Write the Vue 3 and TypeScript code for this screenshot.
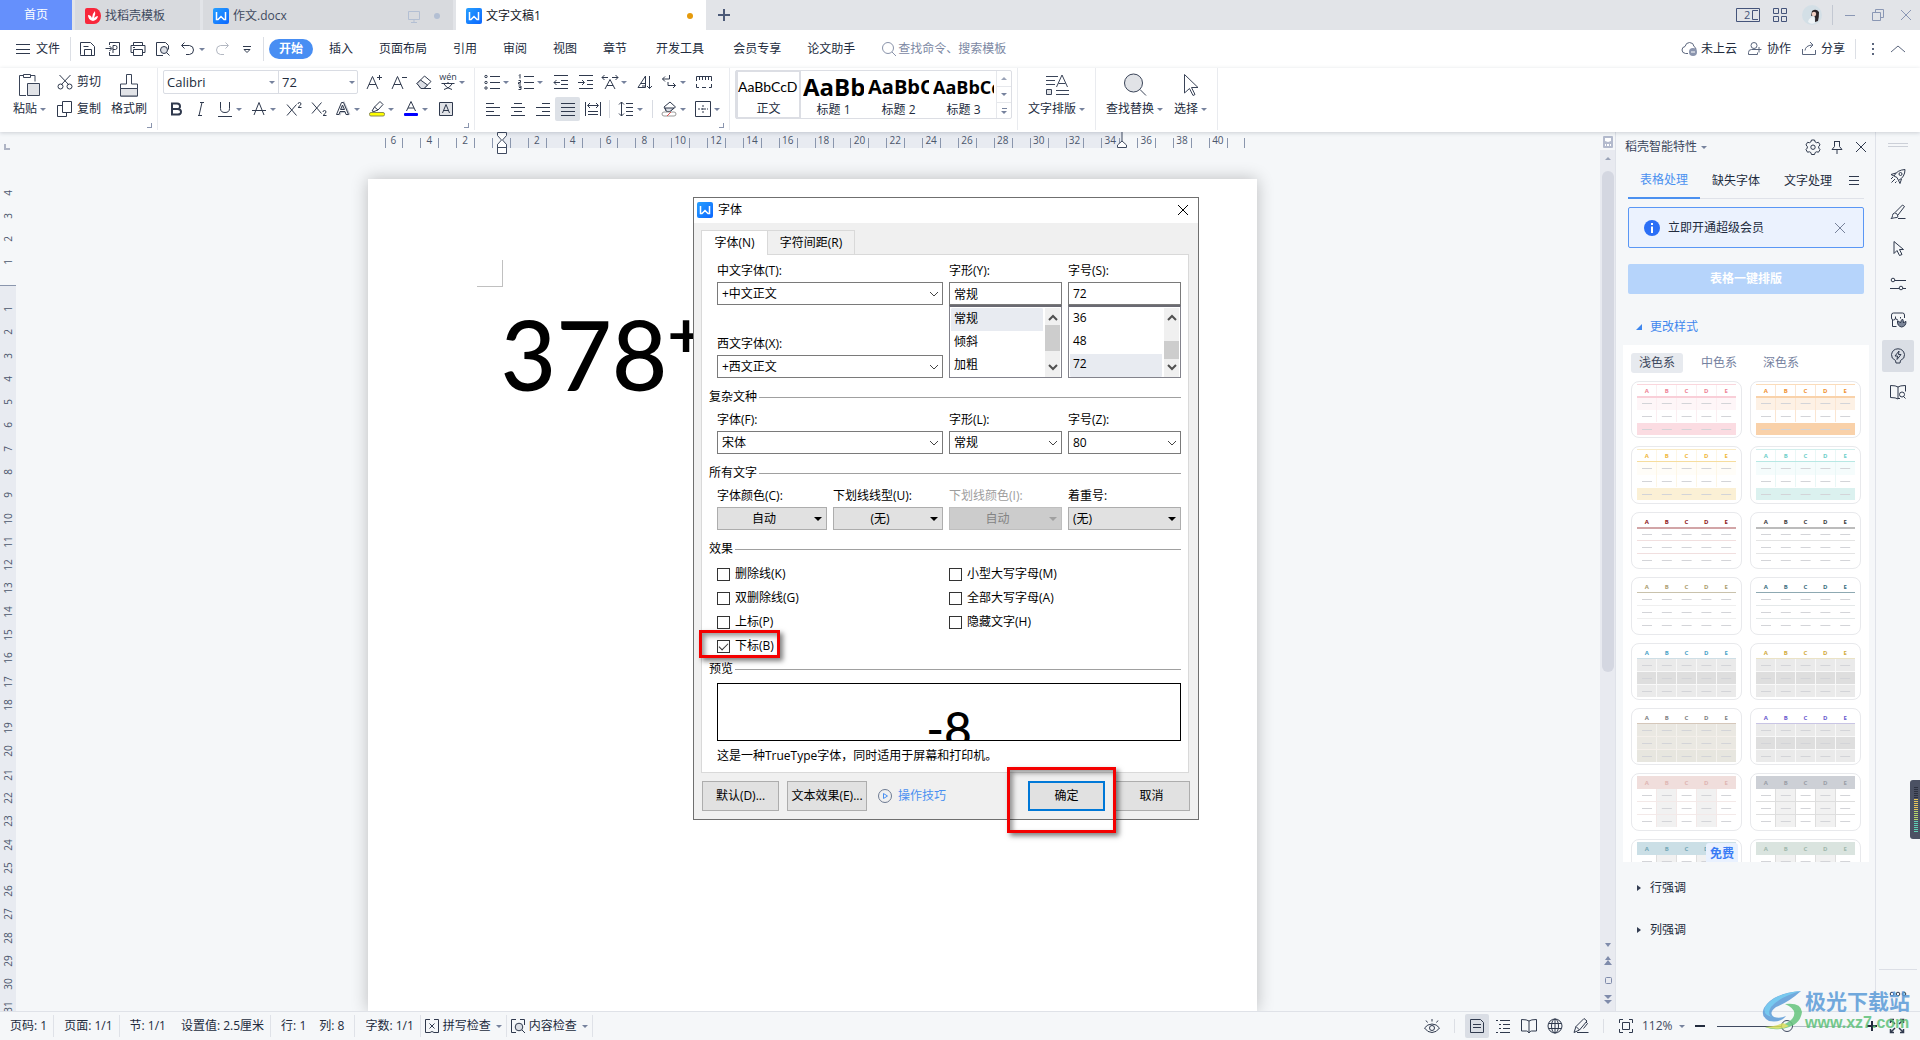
<script setup lang="ts">
import { ref } from 'vue'

interface Tool {
  icon: string
  title: string
  split?: boolean
  active?: boolean
  rule?: boolean
}

interface Thumb {
  letter: string
  line: string
  lineWidth: number
  top?: string
  head?: string
  rows?: string[]
  cols?: string
  rowLine?: string
  colLine?: string
  badge?: string
}

const icons: Record<string, string> = {
  menu: '<path d="M1 3.500h14M1 8.500h14M1 12.500h14"/>',
  save: '<path d="M.5 13.500v-12h10l4 4v9H.5zM4.500 14V8.500h7V14M3.500 5.500h5"/>',
  pdf: '<path d="M4.500 4V1.500h10v13h-10V11M.5 7.500h6M4.500 5l2.500 2.500L4.500 10M8 12V4.500h2.500q1.500 0 1.500 2t-1.500 2H8"/>',
  print: '<path d="M3.500 4.500v-3h9v3M3.500 11.500h-2.500v-7h14v7h-2.500M3.500 8.500h9v6h-9zM3 6.500h2"/>',
  preview: '<path d="M8 14.500H1.500v-13h9l3 3v4"/><circle cx="9" cy="9" r="3.500" fill="#dcdfe5"/><path d="M11.500 11.500l3 3"/>',
  undo: '<path d="M4.500 1.500l-3 3 3 3M2 4.500h7.500q4 .5 4 4.500t-4 4.500H6"/>',
  redo: '<path d="M11.500 1.500l3 3-3 3M14 4.500H6.500q-4 .5-4 4.500t4 4.500H10"/>',
  more: '<path d="M4 5.500h8M5 8.500h6l-3 3z"/>',
  search: '<circle cx="7" cy="7" r="5.500"/><path d="M11 11l4 4"/>',
  cloud: '<path d="M7 12.500H4.500q-3.500-.5-3.500-3.500 0-3 3-3.500 1-4 4.500-4 4 0 4.500 4 2 1 2 3"/><circle cx="12" cy="11" r="4" fill="#8a94ad" stroke="none"/><path d="M10 11h4" stroke="#fff"/>',
  collab: '<circle cx="7" cy="4.500" r="3"/><path d="M1.500 13.500v-2q0-3 3-3h5M1.500 13.500h9v-2M9 8.500h5.500M12 6v5.500"/>',
  share: '<path d="M1.500 8v5.500h13V9M4 9.500q.5-5 7-5.500M9 1l3 3-3 3"/>',
  cut: '<path d="M2.500 1l9.500 10M13.500 1L4 11"/><circle cx="3.500" cy="12.500" r="2.500"/><circle cx="12.500" cy="12.500" r="2.500"/>',
  copy: '<path d="M5 4.500H.5v11h9V12M5.500.5h9v11h-9z"/>',
  growA: '<path d="M1 15L6.500 2.500 12 15M3 10.500h7M11 3.500h5M13.500 1v5"/>',
  shrinkA: '<path d="M1 15L6.500 2.500 12 15M3 10.500h7M11 3.500h5"/>',
  eraser: '<path d="M1 9.500L8.500 2l6.500 5.500-7 7H5z"/><path d="M4.500 6l7 5-3.500 3.500H5L1 9.500z" fill="#dcdfe5"/><path d="M6 14.500h9"/>',
  bold: '<path d="M4 2.500h5q3 0 3 2.800T9 8H4zM4 8h5.500q3.500 0 3.500 2.800t-3.500 2.700H4z" stroke-width="2"/>',
  italic: '<path d="M7 1.500h4M5 14.500h4M9 1.500l-3 13"/>',
  underline: '<path d="M3.500 1v6.500q0 4 4.500 4t4.500-4V1M1 15.500h14"/>',
  strikeA: '<path d="M3 14L8 1.500 13 14M1 9.500h14"/>',
  sup: '<path d="M1 3.500l9.500 11M10.500 3.500L1 14.500M12 3q0-1.500 1.500-1.500T15 3q0 1-3 3.500h3.500"/>',
  sub: '<path d="M1 1.500l9.500 11M10.500 1.500L1 12.500M12 11q0-1.500 1.500-1.500T15 11q0 1-3 3.500h3.500"/>',
  fxA: '<path d="M4 14L9 3l5 11M6 10.500h6" stroke="#c4c8d0" stroke-width="3"/><path d="M1.500 13.500L6.500 1.500h2l5 12h-2.500l-1-3H5l-1 3zM5.500 8.500h4L7.500 4z" fill="#fff"/>',
  marker: '<path d="M3 10l2.500-4L11 .5l3 3L9 9l-4 1.500zM5.500 6L9 9"/><rect x=".5" y="11.500" width="15" height="3.500" rx="1.500" fill="#ff0" stroke="#8b8b55"/>',
  colorA: '<path d="M3.500 10L8 .5 12.500 10M5 7h6"/><rect x="1" y="12" width="14" height="3" rx="1" fill="#00f" stroke="none"/>',
  boxA: '<path d="M1.500 1.500h13v13h-13z" fill="#e1e3e7"/><path d="M4.500 12L8 3.500 11.500 12M5.500 9.500h5"/>',
  bullets: '<circle cx="2" cy="2.500" r="1.200"/><circle cx="2" cy="8.500" r="1.200"/><circle cx="2" cy="14" r="1.200"/><path d="M6 2.500h10M6 8.500h10M6 14.500h10"/>',
  numbers: '<path d="M1 1.500l1-1v4M.5 6.500h2v2h-2v1.500h2.500M.5 12h2.500v3.500H.5M1 13.500h2"/><path d="M6 2.500h10M6 8.500h10M6 14.500h10"/>',
  outdent: '<path d="M1 1.500h14M8 6.500h7M8 10.500h7M1 14.500h14M1 8.500h6M3.500 6L1 8.500 3.500 11"/>',
  indent: '<path d="M1 1.500h14M9 6.500h6M9 10.500h6M1 14.500h14M0 8.500h6M4 6l2.500 2.500L4 11"/>',
  charScale: '<path d="M3 15L8 5.500 13 15M5 11.500h6M0 3.500h6M2.500 1L0 3.500 2.500 6M16 3.500h-6M13.500 1L16 3.500 13.500 6"/>',
  sortA: '<path d="M1 13.500L8.500 2v11.500zM4 9.500h4.500M5 12h3M12.500 2v12.500M10 12l2.500 2.500L15 12"/>',
  wrap: '<path d="M2.500 2v3.500H8M5 3L2.500 5.500 5 8M13.500 5.500v6H5M11 9l2.500 2.500L11 14" stroke="none"/><path d="M8.500 1v4h-7M4 2.500L1.500 5 4 7.500M7 11.500h7.500M12 9l2.500 2.500L12 14M7 8v3.500"/>',
  tabs: '<path d="M.5 7V2.500h15V7M3.500 3v3M6.500 3v3M9.500 3v3M12.500 3v3M.5 10v3.500H3M6 13.500h4M13 13.500h2.500V10"/>',
  left: '<path d="M1 2.500h8M1 6.500h14M1 10.500h8M1 14.500h14"/>',
  center: '<path d="M4 2.500h8M1 6.500h14M4 10.500h8M1 14.500h14"/>',
  right: '<path d="M7 2.500h8M1 6.500h14M7 10.500h8M1 14.500h14"/>',
  justify: '<path d="M1 2.500h14M1 6.500h14M1 10.500h14M1 14.500h14"/>',
  distribute: '<path d="M.5 1v14M15.500 1v14M3 4.500h10M5 2L2.500 4.500 5 7M11 2l2.500 2.500L11 7M3 10.500h10M3 13.500h10"/>',
  spacing: '<path d="M3.500 1v14M1 3.500L3.500 1 6 3.500M1 12.500L3.500 15 6 12.500M8 2.500h7M8 6.500h7M8 10.500h7M8 14.500h7"/>',
  fill: '<path d="M3 6l6-5 5.500 5L9 10.500H5.500z"/><path d="M4 7h9L9 10.500H5.500z" fill="#dcdfe5"/><rect x="1" y="11" width="14" height="4" rx="2" stroke="#999"/><path d="M6 15l4-4" stroke="#e05050"/>',
  borders: '<path d="M.5 .5h15v15H.5z"/><path d="M8 4v9M3 8h10" stroke-dasharray="2 1"/>',
  gear: '<path d="M6.500 1h3l.7 2 1.300.7 2-.4 1.500 2.600-1.300 1.600v1.500l1.300 1.600-1.500 2.600-2-.4-1.300.7-.7 2h-3l-.7-2-1.300-.7-2 .4L1 10.600 2.300 9V7.500L1 5.900l1.500-2.600 2 .4L5.800 3z"/><circle cx="8" cy="8.200" r="2.200"/>',
  pin: '<path d="M5 2.500h6M5.500 2.500v5L3 10.500h10L10.500 7.500v-5M8 11v4"/>',
  close: '<path d="M3 3l10 10M13 3L3 13"/>',
  rocket: '<path d="M4 8q3-6 11-6.500Q15 9 8.500 12.500L7 9.500zM8.500 12.500l1.500 3 1.500-4.500M4 8L1 6.500 6 5"/><circle cx="10.500" cy="6" r="1.500"/><path d="M1 11l2-2M1.500 14.500L5 11M5 15l1.500-1.500"/>',
  brush: '<path d="M1 14.500q1.500-1 1.500-3t2-2.500 3 2-.5 2.500-6 1zM5 8.500L12.500 1l2 1.500L8 11M8 14.500h7.500"/>',
  cursor: '<path d="M4 1.500v12l3-3 2.500 5 2.500-1-2.500-5h4z"/>',
  sliders: '<circle cx="3" cy="4" r="1.800"/><path d="M5 4.500h11M0 12.500h9M13 12.500h3"/><circle cx="11" cy="12" r="1.800"/>',
  shop: '<path d="M6.500 14.500H2.500V8M1.500 3q0-2 2-2h9q2 0 2 2v3M1.500 3v3q0 2 2 2t2-2q.5 2 2.500 2M5.500 6V4.500M10.500 5v1.500"/><path d="M11.500 15Q7 14 7.500 9q2 0 3 2 .5-3 2-4 1 1.500 1 4 1-1.500 2.500-1.500 0 5-4.500 5.500z" fill="#7b8598"/>',
  bulb: '<path d="M5.500 12.500Q1 10.500 1.500 6.500 2.500 1 8 .8 13.500 1 14.500 6.500q.5 4-4 6l-.5 2.500H6zM9 3L5 8h2.500L7 11.500l4-5H8.500z"/>',
  book: '<path d="M8 3Q6 1.500.5 1.500v12Q6 13.500 8 15V3q2-1.500 7.500-1.500v6M8 14.500h2"/><circle cx="12" cy="10.500" r="2.500"/><path d="M13.500 12.500l2 2"/>',
  eye: '<path d="M.5 10Q3.500 6 8 6t7.500 4q-3 4.500-7.500 4.500T.5 10zM8 1v2.500M2 2.500l1.500 2M14 2.500l-1.500 2"/><circle cx="8" cy="10" r="2.500"/>',
  page: '<path d="M1.500 1.500h10l3 3v10h-13zM4 6.500h8M4 9.500h8"/>',
  outline: '<path d="M1 2.500h2M5 2.500h10M4 6.500h2M8 6.500h7M4 10.500h2M8 10.500h7M1 14.500h2M5 14.500h10"/>',
  reading: '<path d="M8 3Q6 1.500.5 1.500v11.500h5Q7 13 8 15q1-2 2.500-2h5V1.500Q10 1.500 8 3v12"/>',
  globe: '<circle cx="8" cy="8" r="7"/><ellipse cx="8" cy="8" rx="3.500" ry="7"/><path d="M8 1v14M1.500 5.500h13M1.500 10.500h13"/>',
  pen: '<path d="M1 14.500l2-6 8-8 3 2.500-7.500 9zM3 8.500L6.500 12M4 14.500h11.500M13 4l1.500 1.500-4 5"/>',
  fit: '<path d="M1.500 5V1.500H5M11 1.500h3.500V5M14.500 11v3.500H11M5 14.500H1.500V11M4.500 4.500h7v7h-7z"/>',
  full: '<path d="M1.500 5V1.500H5M11 1.500h3.500V5M14.500 11v3.500H11M5 14.500H1.500V11M2 2l4 4M14 2l-4 4M14 14l-4-4M2 14l4-4" stroke-width="1.500"/>',
  spell: '<path d="M6 1.500H1.500v13H6M10 1.500h4.500v13H10M5.500 5.500l5 5M10.500 5.500l-5 5M6 14.500l2-1 2 1"/>',
  content: '<path d="M6 1.500H1.500v13H6M10 1.500h4.500V7"/><circle cx="9" cy="9" r="3.800" fill="#dcdfe5"/><path d="M12 12l3 3"/>',
}

const fontTop: Tool[] = [
  { icon: 'growA', title: '增大字号' },
  { icon: 'shrinkA', title: '减小字号' },
  { icon: 'eraser', title: '清除格式' },
]
const fontBottom: Tool[] = [
  { icon: 'bold', title: '加粗' },
  { icon: 'italic', title: '倾斜' },
  { icon: 'underline', title: '下划线', split: true },
  { icon: 'strikeA', title: '删除线', split: true },
  { icon: 'sup', title: '上标' },
  { icon: 'sub', title: '下标' },
  { icon: 'fxA', title: '文字效果', split: true },
  { icon: 'marker', title: '突出显示', split: true },
  { icon: 'colorA', title: '字体颜色', split: true },
  { icon: 'boxA', title: '字符底纹' },
]
const paraTop: Tool[] = [
  { icon: 'bullets', title: '项目符号', split: true },
  { icon: 'numbers', title: '编号', split: true },
  { icon: 'outdent', title: '减少缩进量' },
  { icon: 'indent', title: '增加缩进量' },
  { icon: 'charScale', title: '中文版式', split: true },
  { icon: 'sortA', title: '排序' },
  { icon: 'wrap', title: '显示编辑标记', split: true },
  { icon: 'tabs', title: '制表位' },
]
const paraBottom: Tool[] = [
  { icon: 'left', title: '左对齐' },
  { icon: 'center', title: '居中' },
  { icon: 'right', title: '右对齐' },
  { icon: 'justify', title: '两端对齐', active: true },
  { icon: 'distribute', title: '分散对齐', rule: true },
  { icon: 'spacing', title: '行距', split: true, rule: true },
  { icon: 'fill', title: '底纹颜色', split: true },
  { icon: 'borders', title: '边框', split: true },
]

const menus = ['插入', '页面布局', '引用', '审阅', '视图', '章节', '开发工具', '会员专享', '论文助手']
const quick = ['save', 'pdf', 'print', 'preview']
const styles = [
  { sample: 'AaBbCcD', label: '正文', kind: 'normal' },
  { sample: 'AaBb', label: '标题 1', kind: 'h1' },
  { sample: 'AaBbC', label: '标题 2', kind: 'h2' },
  { sample: 'AaBbCc', label: '标题 3', kind: 'h3' },
]

// Ruler cells are one unit wide, labelled on even units only.
const hUnits = Array.from({ length: 48 }, (_, i) => i - 6)
const vUnits = Array.from({ length: 36 }, (_, i) => i - 4)
const hLabel = (n: number) => (n !== 0 && n % 2 === 0 ? Math.abs(n) : '')

const grey = ['#eaeaea', '#dedede', '#eaeaea']
const thumbs: Thumb[] = [
  { letter: '#ee7f95', top: '#fad7dd', line: '#f9cfd8', lineWidth: 2, rows: ['#fef6f8', '#fff', '#fbdce2'], colLine: '#fbeef1' },
  { letter: '#f0902e', top: '#fbdcba', line: '#f9d2aa', lineWidth: 2, rows: ['#fdf1e5', '#fff', '#f9d1a9'], colLine: '#fbe6d2' },
  { letter: '#efb83c', top: '#f9ebc7', line: '#f6dd9e', lineWidth: 1, rows: ['#fffdf8', '#fff', '#fbf0d5'], colLine: '#fdf6e6' },
  { letter: '#6fcfc9', top: '#d3efed', line: '#b8e8e4', lineWidth: 1, rows: ['#f5fcfc', '#fff', '#dbf1ef'], colLine: '#eaf7f6' },
  { letter: '#8c1216', line: '#d2a5a7', lineWidth: 2, rowLine: '#f1dfdf' },
  { letter: '#3c3c3c', line: '#bcbcbc', lineWidth: 2, rowLine: '#e4e4e4' },
  { letter: '#ab9d6e', line: '#c9c2ac', lineWidth: 1, rowLine: '#efefef' },
  { letter: '#3c6e7e', line: '#8ea9b2', lineWidth: 1, rowLine: '#e4e8e9' },
  { letter: '#4ba3c8', line: '#cfdfe6', lineWidth: 1, rows: grey, rowLine: '#f8f8f8', colLine: '#f8f8f8' },
  { letter: '#d1ab3c', line: '#ebe3c6', lineWidth: 1, rows: grey, rowLine: '#f8f8f8', colLine: '#f8f8f8' },
  { letter: '#808080', line: '#d5c7ba', lineWidth: 1, rows: ['#eae8e2', '#eae8e2', '#e7e6df'], rowLine: '#f4efea', colLine: '#f4f2ee' },
  { letter: '#6858cd', line: '#c9c5e4', lineWidth: 1, rows: grey, rowLine: '#f8f8f8', colLine: '#f8f8f8' },
  { letter: '#dfb6b3', line: '#f0dedc', lineWidth: 1, head: '#f0dedc', cols: '#f1f1f1', rowLine: '#f3e9e8', colLine: '#f3e9e8' },
  { letter: '#9a9ea6', line: '#cdd0d6', lineWidth: 1, head: '#cdd0d6', cols: '#f1f1f1', rowLine: '#dedede', colLine: '#dedede' },
  { letter: '#73a7b6', line: '#cbdfe6', lineWidth: 1, head: '#cbdfe6', cols: '#f1f1f1', rowLine: '#dedede', colLine: '#dedede', badge: '免费' },
  { letter: '#a0b8ac', line: '#dae4df', lineWidth: 1, head: '#dae4df', cols: '#f1f1f1', rowLine: '#dedede', colLine: '#dedede' },
]
const letters = ['A', 'B', 'C', 'D', 'E']
const railIcons = ['rocket', 'brush', 'cursor', 'sliders', 'shop', 'bulb', 'book']
const viewIcons = ['page', 'outline', 'reading', 'globe', 'pen']

const effects = ref([
  { id: 'strike', label: '删除线(K)', on: false },
  { id: 'smallcaps', label: '小型大写字母(M)', on: false },
  { id: 'dstrike', label: '双删除线(G)', on: false },
  { id: 'allcaps', label: '全部大写字母(A)', on: false },
  { id: 'superscript', label: '上标(P)', on: false },
  { id: 'hidden', label: '隐藏文字(H)', on: false },
  { id: 'subscript', label: '下标(B)', on: true },
])
const fontStyle = ref('常规')
const fontSize = ref('72')
const zoom = ref(48)
const meter = Array.from({ length: 23 }, (_, i) => (i < 6 ? '#2c3140' : i < 12 ? '#e6c65a' : i < 17 ? '#b5d76a' : '#5fd0b4'))
</script>

<template>
  <div class="app">
    <header class="tabbar">
      <button class="home">首页</button>
      <button class="doc docer">
        <svg class="logo" viewBox="0 0 16 16"><path d="M2 0h7a7 8 0 0 1 0 16H2q-2 0-2-2V2q0-2 2-2z" fill="#f8273b" /><path d="M8 13Q3 12 3 7q3 0 4 3 0-4 3-7 1 3-1 7 2-2 4-2-.5 4-5 5z" fill="#fff" /></svg>
        <span>找稻壳模板</span>
      </button>
      <button class="doc wide">
        <svg class="logo" viewBox="0 0 16 16"><use href="#wlogo" /></svg>
        <span>作文.docx</span>
        <svg class="ico mon" viewBox="0 0 16 16"><path d="M2.500 3.500h11v8h-11zM8 12v2.500M5 14.500h6" /></svg>
        <i class="dot"></i>
      </button>
      <button class="doc wide current">
        <svg class="logo" viewBox="0 0 16 16">
          <defs>
            <linearGradient id="wblue" x1="0" y1="0" x2="1" y2="1"><stop offset="0" stop-color="#27a0ff" /><stop offset="1" stop-color="#0b66ff" /></linearGradient>
            <g id="wlogo"><rect width="16" height="16" rx="2" fill="url(#wblue)" /><path d="M3.500 4v7.500h1.500L8 8.500l3 3h1.500V4" fill="none" stroke="#fff" stroke-width="1.500" /></g>
          </defs>
          <use href="#wlogo" />
        </svg>
        <span>文字文稿1</span>
        <i class="dot orange"></i>
      </button>
      <button class="plus" aria-label="新建"><svg viewBox="0 0 12 12"><path d="M6 0v12M0 6h12" stroke="#4c5a78" stroke-width="2" /></svg></button>
      <div class="sys">
        <svg class="s-two" viewBox="0 0 24 14"><path d="M.5.5h23v13H.5zM22 2.500h-5.500v9H22M19 11.500h2" /><text x="8" y="11">2</text></svg>
        <svg class="s-grid" viewBox="0 0 14 14"><path d="M.5.5h5v5h-5zM8.500.5h5v5h-5zM.5 8.500h5v5h-5zM8.500 8.500h5v5h-5z" /></svg>
        <svg class="s-avatar" viewBox="0 0 20 20"><circle cx="10" cy="10" r="10" fill="#d3dfe6" /><path d="M10 6q4-3 7 1 0 6-1 9l-3 1q1-4-1-7l-3 1z" fill="#2b2427" /><circle cx="12" cy="9" r="2.200" fill="#f1cfc2" /><path d="M6 17q1-5 6-5l1 6q-4 2-7-1z" fill="#eef3f6" /></svg>
        <i class="vline"></i>
        <button aria-label="最小化"><svg viewBox="0 0 12 12"><path d="M1 6.500h10" /></svg></button>
        <button aria-label="还原"><svg viewBox="0 0 12 12"><path d="M.5 3.500h8v8h-8zM3.500 3V.5h8v8H9" /></svg></button>
        <button aria-label="关闭"><svg viewBox="0 0 12 12"><path d="M1 1l10 10M11 1L1 11" /></svg></button>
      </div>
    </header>

    <nav class="menubar">
      <button class="file"><svg class="ico" viewBox="0 0 16 16" v-html="icons.menu"></svg>文件</button>
      <i class="vline"></i>
      <div class="quick">
        <button v-for="q in quick" :key="q" :aria-label="q"><svg class="ico" viewBox="0 0 16 16" v-html="icons[q]"></svg></button>
        <button class="undo" aria-label="撤消"><svg class="ico" viewBox="0 0 16 16" v-html="icons.undo"></svg><i class="caret"></i></button>
        <button class="faded" aria-label="恢复"><svg class="ico" viewBox="0 0 16 16" v-html="icons.redo"></svg></button>
        <button aria-label="更多"><svg class="ico" viewBox="0 0 16 16" v-html="icons.more"></svg></button>
      </div>
      <i class="vline"></i>
      <button class="pill">开始</button>
      <button v-for="m in menus" :key="m" class="menu" :class="{ roomy: m === '开发工具' }">{{ m }}</button>
      <label class="find"><svg class="ico" viewBox="0 0 16 16" v-html="icons.search"></svg><input type="text" aria-label="搜索" placeholder="查找命令、搜索模板" /></label>
      <div class="cloudbar">
        <button><svg class="ico" viewBox="0 0 16 16" v-html="icons.cloud"></svg>未上云</button>
        <button><svg class="ico" viewBox="0 0 16 16" v-html="icons.collab"></svg>协作</button>
        <button><svg class="ico" viewBox="0 0 16 16" v-html="icons.share"></svg>分享</button>
        <i class="vline"></i>
        <button class="tiny" aria-label="更多选项"><svg class="ico" viewBox="0 0 16 16"><path d="M7 3h2M7 8h2M7 13h2" stroke-width="2" /></svg></button>
        <button class="tiny" aria-label="收起功能区"><svg class="ico" viewBox="0 0 16 16"><path d="M1 11l7-6 7 6" /></svg></button>
      </div>
    </nav>

    <section class="ribbon">
      <div class="group clip">
        <button class="big">
          <svg class="bigico" viewBox="0 0 24 24"><path d="M8 22.500H1.500v-20h4M13 2.500h4v6" /><path d="M5.500 1.500h7v3h-7z" fill="#fff" /><path d="M9.500 10.500h12v12h-12z" fill="#e1e3e7" /></svg>
          <span>粘贴<i class="caret"></i></span>
        </button>
        <div class="stack">
          <button><svg class="ico" viewBox="0 0 16 16" v-html="icons.cut"></svg>剪切</button>
          <button><svg class="ico" viewBox="0 0 16 16" v-html="icons.copy"></svg>复制</button>
        </div>
        <button class="big">
          <svg class="bigico" viewBox="0 0 22 24"><path d="M8.500 11V1.500h5V11h6v12h-17V11z" /><path d="M2.500 15.500h17v7.500h-17z" fill="#e1e3e7" /></svg>
          <span>格式刷</span>
        </button>
        <i class="corner"></i>
      </div>

      <div class="group font">
        <div class="line">
          <div class="combo">
            <input class="name" type="text" aria-label="字体" value="Calibri" /><i class="caret"></i>
            <input class="size" type="text" aria-label="字号" value="72" /><i class="caret"></i>
          </div>
          <button v-for="t in fontTop" :key="t.icon" class="tool" :title="t.title"><svg class="ico" viewBox="0 0 16 16" v-html="icons[t.icon]"></svg></button>
          <button class="tool split" title="拼音指南">
            <svg class="ico" viewBox="0 0 16 16"><text class="wen" x="8" y="6">wén</text><path d="M1.500 9.500h13M8 8v1M4 10q2 4 8 5.500M12 10q-2 4-8 5.500" /></svg><i class="caret"></i>
          </button>
        </div>
        <div class="line">
          <button v-for="t in fontBottom" :key="t.icon" class="tool" :class="{ split: t.split }" :title="t.title">
            <svg class="ico" viewBox="0 0 16 16" v-html="icons[t.icon]"></svg><i v-if="t.split" class="caret"></i>
          </button>
        </div>
        <i class="corner"></i>
      </div>

      <div class="group para">
        <div class="line">
          <button v-for="t in paraTop" :key="t.icon" class="tool" :class="{ split: t.split }" :title="t.title">
            <svg class="ico" viewBox="0 0 16 16" v-html="icons[t.icon]"></svg><i v-if="t.split" class="caret"></i>
          </button>
        </div>
        <div class="line">
          <template v-for="t in paraBottom" :key="t.icon">
            <button class="tool" :class="{ split: t.split, active: t.active }" :title="t.title">
              <svg class="ico" viewBox="0 0 16 16" v-html="icons[t.icon]"></svg><i v-if="t.split" class="caret"></i>
            </button>
            <i v-if="t.rule" class="rule"></i>
          </template>
        </div>
        <i class="corner"></i>
      </div>

      <div class="group gallery">
        <div class="styles">
          <button v-for="s in styles" :key="s.label" class="style" :class="s.kind">
            <span class="sample">{{ s.sample }}</span>
            <span class="name">{{ s.label }}</span>
          </button>
          <div class="spin">
            <button aria-label="上一行"><i class="caret up"></i></button>
            <button aria-label="下一行"><i class="caret"></i></button>
            <button class="exp" aria-label="展开"><i class="caret"></i></button>
          </div>
        </div>
      </div>

      <div class="group wide">
        <button class="big">
          <svg class="bigico" viewBox="0 0 24 24"><path d="M1 3.500h12M1 7.500h9M1 11.500h9M11.500 14L17 2l5.500 12M13.500 10.500h7M11 17.500h13M11 21.500h13" /><path d="M1.500 16.500h5v5h-5z" fill="#e1e3e7" /></svg>
          <span>文字排版<i class="caret"></i></span>
        </button>
      </div>
      <div class="group wide">
        <button class="big">
          <svg class="bigico" viewBox="0 0 24 24"><circle cx="10.500" cy="10" r="9" fill="#e1e3e7" /><path d="M17 16.500l6 6" /></svg>
          <span>查找替换<i class="caret"></i></span>
        </button>
        <button class="big">
          <svg class="bigico" viewBox="0 0 24 24"><path d="M5.500 1.500v18.500l5-4.500 3.500 7 2-1-3.500-7h6.500z" /></svg>
          <span>选择<i class="caret"></i></span>
        </button>
      </div>
    </section>

    <main class="work">
      <div class="vruler">
        <svg class="tabmark" viewBox="0 0 6 6"><path d="M1 0v5h5" stroke="#aeb4c4" stroke-width="2" fill="none" /></svg>
        <div class="vstrip"><span v-for="n in vUnits" :key="n"><b v-if="n">{{ Math.abs(n) }}</b></span></div>
      </div>

      <div class="editor">
        <div class="hruler">
          <div class="hstrip">
            <span v-for="n in hUnits" :key="n">{{ hLabel(n) }}</span>
            <svg class="mark first" viewBox="0 0 10 22"><path d="M.5.5h9v3l-4 4.500 4 4.500v9h-9v-9l4-4.500-4-4.500zM.5 15.500h9M.5 12.500v3M9.500 12.500v3" /></svg>
            <svg class="mark last" viewBox="0 0 10 16"><path d="M5 0v9l4.500 4v2.500h-9V13L5 9" /></svg>
          </div>
        </div>
        <article class="paper">
          <div class="margin"></div>
          <p class="content">378<span>+</span></p>
        </article>
      </div>

      <div class="scroll">
        <svg class="ico brick" viewBox="0 0 10 12"><rect width="10" height="12" rx="1" fill="#b3bacd" stroke="none" /><path d="M2 2h6v3L5 6 2 5zM2 8h1v2h1V8h2v2h1V8h1v2H2z" fill="#fff" stroke="none" /></svg>
        <div class="track">
          <i class="caret up"></i>
          <div class="thumb"></div>
          <svg class="nav" viewBox="0 0 10 64"><path d="M2 1h6L5 5zM5 14l3 4H2zM5 18l4 5H1zM1 53h8l-4 4zM1 58h8l-4 4z" fill="#7f8bab" /><rect x="2.500" y="35.500" width="6" height="6" rx="1" fill="none" stroke="#7f8bab" /></svg>
        </div>
      </div>

      <aside class="pane">
        <div class="panehead">
          <span>稻壳智能特性</span><i class="caret"></i>
          <button class="first" aria-label="设置"><svg class="ico" viewBox="0 0 16 16" v-html="icons.gear"></svg></button>
          <button aria-label="固定"><svg class="ico" viewBox="0 0 16 16" v-html="icons.pin"></svg></button>
          <button aria-label="关闭面板"><svg class="ico" viewBox="0 0 16 16" v-html="icons.close"></svg></button>
        </div>
        <div class="panetabs">
          <button class="on">表格处理</button><button>缺失字体</button><button>文字处理</button>
          <button class="ham" aria-label="全部"><svg class="ico" viewBox="0 0 10 12"><path d="M0 1.500h10M0 5.500h10M0 9.500h10" /></svg></button>
        </div>
        <div class="banner">
          <svg viewBox="0 0 16 16"><circle cx="8" cy="8" r="8" fill="#2b6ff6" /><path d="M8 3v2M8 6.500V13" stroke="#fff" stroke-width="2" /></svg>
          <span>立即开通超级会员</span>
          <button aria-label="关闭提示"><svg class="ico" viewBox="0 0 16 16" v-html="icons.close"></svg></button>
        </div>
        <button class="layout">表格一键排版</button>
        <button class="fold open"><svg viewBox="0 0 6 6"><path d="M6 0v6H0z" fill="#3f87ee" /></svg>更改样式</button>
        <div class="panel">
          <div class="tones"><button class="on">浅色系</button><button>中色系</button><button>深色系</button></div>
          <div class="cards">
            <button v-for="(t, i) in thumbs" :key="i" class="card" :aria-label="'表格样式 ' + (i + 1)">
              <svg viewBox="0 0 99 51">
                <rect v-if="t.head" width="99" height="13" :fill="t.head" />
                <template v-if="t.cols">
                  <rect x="19.800" y="13" width="19.800" height="38" :fill="t.cols" />
                  <rect x="59.400" y="13" width="19.800" height="38" :fill="t.cols" />
                </template>
                <template v-if="t.rows">
                  <rect v-for="(c, r) in t.rows" :key="r" width="99" :y="13 + r * 13" :height="r === 2 ? 12 : 13" :fill="c" />
                </template>
                <rect v-if="t.top" width="99" height="1" :fill="t.top" />
                <template v-if="t.colLine">
                  <rect v-for="c in 4" :key="c" :x="c * 20 - 1" :y="t.cols || t.rowLine ? 13 : 1" width="1" :height="t.top ? 37 : 38" :fill="t.colLine" />
                </template>
                <template v-if="t.rowLine">
                  <rect y="25" width="99" height="1" :fill="t.rowLine" />
                  <rect y="38" width="99" height="1" :fill="t.rowLine" />
                </template>
                <rect y="12" width="99" :height="t.lineWidth" :fill="t.line" />
                <template v-for="(l, c) in letters" :key="l">
                  <text :x="9.9 + c * 19.8" y="9" :fill="t.letter">{{ l }}</text>
                  <rect v-for="r in 3" :key="r" :x="5 + c * 19.8" :y="6 + r * 13" width="10" height="1" fill="#d3d4d8" />
                </template>
              </svg>
              <span v-if="t.badge" class="badge">{{ t.badge }}</span>
            </button>
          </div>
        </div>
        <button class="fold"><svg viewBox="0 0 6 6"><path d="M1 0l4 3-4 3z" fill="#333d52" /></svg>行强调</button>
        <button class="fold"><svg viewBox="0 0 6 6"><path d="M1 0l4 3-4 3z" fill="#333d52" /></svg>列强调</button>
      </aside>

      <aside class="rail">
        <div class="grip"></div>
        <button v-for="r in railIcons" :key="r" :class="{ on: r === 'bulb' }" :aria-label="r"><svg class="ico" viewBox="0 0 16 16" v-html="icons[r]"></svg></button>
        <div class="railfoot"><svg class="ico" viewBox="0 0 18 6"><circle cx="3" cy="3" r="1.800" /><circle cx="9" cy="3" r="1.800" /><circle cx="15" cy="3" r="1.800" /></svg></div>
      </aside>
    </main>

    <footer class="status">
      <span class="cell lead">页码: 1</span>
      <span class="cell">页面: 1/1</span>
      <span class="cell open">节: 1/1</span>
      <span class="cell">设置值: 2.5厘米</span>
      <span class="cell open">行: 1</span>
      <span class="cell pad">列: 8</span>
      <span class="cell">字数: 1/1</span>
      <button class="cell check"><svg class="ico" viewBox="0 0 16 16" v-html="icons.spell"></svg>拼写检查<i class="caret"></i></button>
      <button class="cell check"><svg class="ico" viewBox="0 0 16 16" v-html="icons.content"></svg>内容检查<i class="caret"></i></button>
      <div class="views">
        <button aria-label="护眼模式"><svg class="ico" viewBox="0 0 16 16" v-html="icons.eye"></svg></button>
        <i class="vline"></i>
        <button v-for="v in viewIcons" :key="v" :class="{ on: v === 'page' }" :aria-label="v"><svg class="ico" viewBox="0 0 16 16" v-html="icons[v]"></svg></button>
        <i class="vline"></i>
        <button aria-label="适合页面"><svg class="ico" viewBox="0 0 16 16" v-html="icons.fit"></svg></button>
        <button class="pct">112%<i class="caret"></i></button>
        <button class="step" aria-label="缩小"><svg viewBox="0 0 10 10"><path d="M0 5h10" /></svg></button>
        <input v-model="zoom" type="range" min="0" max="100" aria-label="缩放" />
        <button class="step" aria-label="放大"><svg viewBox="0 0 10 10"><path d="M0 5h10M5 0v10" /></svg></button>
        <button class="fullscreen" aria-label="全屏"><svg class="ico" viewBox="0 0 16 16" v-html="icons.full"></svg></button>
      </div>
    </footer>

    <section class="dialog" role="dialog" aria-label="字体">
      <div class="titlebar">
        <svg class="logo" viewBox="0 0 16 16"><use href="#wlogo" /></svg>
        <span>字体</span>
        <button aria-label="关闭对话框"><svg viewBox="0 0 12 12"><path d="M1 1l10 10M11 1L1 11" stroke="#000" /></svg></button>
      </div>
      <div class="dtabs"><button class="on">字体(N)</button><button>字符间距(R)</button></div>
      <div class="sheet">
        <div class="cols three">
          <div class="col">
            <div class="field">
              <label for="cn">中文字体(T):</label>
              <div class="drop"><select id="cn"><option>+中文正文</option></select><svg viewBox="0 0 10 6"><path d="M1 1l4 4 4-4" /></svg></div>
            </div>
            <div class="field">
              <label for="en">西文字体(X):</label>
              <div class="drop"><select id="en"><option>+西文正文</option></select><svg viewBox="0 0 10 6"><path d="M1 1l4 4 4-4" /></svg></div>
            </div>
          </div>
          <div class="field">
            <label for="fs">字形(Y):</label>
            <input id="fs" v-model="fontStyle" type="text" />
            <div class="list">
              <select v-model="fontStyle" size="3" aria-label="字形列表"><option>常规</option><option>倾斜</option><option>加粗</option></select>
              <div class="bar"><svg viewBox="0 0 10 6"><path d="M1 5l4-4 4 4" /></svg><i></i><svg viewBox="0 0 10 6"><path d="M1 1l4 4 4-4" /></svg></div>
            </div>
          </div>
          <div class="field">
            <label for="sz">字号(S):</label>
            <input id="sz" v-model="fontSize" type="text" />
            <div class="list">
              <select v-model="fontSize" size="3" aria-label="字号列表"><option>36</option><option>48</option><option>72</option></select>
              <div class="bar low"><svg viewBox="0 0 10 6"><path d="M1 5l4-4 4 4" /></svg><i></i><svg viewBox="0 0 10 6"><path d="M1 1l4 4 4-4" /></svg></div>
            </div>
          </div>
        </div>

        <h3>复杂文种</h3>
        <div class="cols three">
          <div class="field"><label for="cf">字体(F):</label><div class="drop"><select id="cf"><option>宋体</option></select><svg viewBox="0 0 10 6"><path d="M1 1l4 4 4-4" /></svg></div></div>
          <div class="field"><label for="cs">字形(L):</label><div class="drop"><select id="cs"><option>常规</option></select><svg viewBox="0 0 10 6"><path d="M1 1l4 4 4-4" /></svg></div></div>
          <div class="field"><label for="cz">字号(Z):</label><div class="drop"><select id="cz"><option>80</option></select><svg viewBox="0 0 10 6"><path d="M1 1l4 4 4-4" /></svg></div></div>
        </div>

        <h3>所有文字</h3>
        <div class="cols four">
          <div class="field"><label for="fc">字体颜色(C):</label><div class="drop flat"><select id="fc"><option>自动</option></select><i></i></div></div>
          <div class="field"><label for="ul">下划线线型(U):</label><div class="drop flat"><select id="ul"><option>(无)</option></select><i></i></div></div>
          <div class="field off"><label for="uc">下划线颜色(I):</label><div class="drop flat"><select id="uc" disabled><option>自动</option></select><i></i></div></div>
          <div class="field"><label for="em">着重号:</label><div class="drop flat start"><select id="em"><option>(无)</option></select><i></i></div></div>
        </div>

        <h3>效果</h3>
        <div class="effects">
          <label v-for="e in effects" :key="e.id"><input v-model="e.on" type="checkbox" />{{ e.label }}</label>
        </div>

        <h3 class="tight">预览</h3>
        <div class="sampler">-8</div>
        <p class="note">这是一种TrueType字体，同时适用于屏幕和打印机。</p>
      </div>
      <div class="actions">
        <button>默认(D)...</button>
        <button class="mid">文本效果(E)...</button>
        <a href="#"><svg viewBox="0 0 14 14"><circle cx="7" cy="7" r="6.500" stroke="#6d7a92" /><path d="M5.500 4.500v5l4-2.500z" stroke="#4a90f0" /></svg>操作技巧</a>
        <button class="ok">确定</button>
        <button>取消</button>
      </div>
      <div class="hint hint-sub"></div>
      <div class="hint hint-ok"></div>
    </section>

    <div class="meter"><i v-for="(c, i) in meter" :key="i" :style="{ background: c }"></i></div>

    <div class="watermark">
      <svg viewBox="0 0 44 42">
        <path d="M40 2Q12 4 3 19-1 27 8 32q12 2 17-5-6 3-12 1-6-4 2-10Q28 13 40 2z" fill="#5b9bd8" />
        <path d="M40 2Q18 8 10 18q-5 9 3 10-12-1-9-10Q14 4 40 2z" fill="#62c2ee" />
        <path d="M24 15q16-2 17 8-2 15-22 17-8 1-15-2 20 0 27-8 7-9-7-15z" fill="#65c47d" />
        <path d="M4 38q12-1 18-4l6 3q-10 5-24 1z" fill="#d7dd5a" />
      </svg>
      <div><strong>极光下载站</strong><em>www.xz7.com</em></div>
    </div>
  </div>
</template>

<style>
body {
  overflow: hidden;
}
</style>

<style scoped>
.app {
  position: relative;
  display: flex;
  flex-direction: column;
  height: 100vh;
  overflow: hidden;
  background: #f5f7f9;
  color: #222b3d;
  font: 12px/18px "Open Sans", "Noto Sans CJK SC", sans-serif;
}
.app * {
  box-sizing: border-box;
}
button,
input,
select {
  margin: 0;
  padding: 0;
  border: 0;
  background: none;
  color: inherit;
  font: inherit;
  outline: 0;
}
button {
  display: inline-flex;
  align-items: center;
  justify-content: center;
  flex: none;
  white-space: nowrap;
}
svg {
  display: block;
  flex: none;
  overflow: visible;
}
.ico {
  width: 16px;
  height: 16px;
  fill: none;
  stroke: #2f394d;
}
.logo {
  width: 16px;
  height: 16px;
}
.caret {
  flex: none;
  width: 0;
  height: 0;
  border: 3px solid transparent;
  border-top-color: #76829d;
  border-bottom-width: 0;
}
.caret.up {
  border-top-width: 0;
  border-bottom: 3px solid #9aa3b8;
}
.vline {
  flex: none;
  width: 1px;
  height: 24px;
  background: #dcdfe5;
}

/* window tabs */
.tabbar {
  display: flex;
  flex: none;
  height: 30px;
  background: #e2e4e8;
}
.home {
  width: 72px;
  margin-right: 3px;
  background: #6590fc;
  color: #fff;
}
.doc {
  justify-content: flex-start;
  gap: 4px;
  width: 125px;
  margin-right: 3px;
  padding: 2px 10px 0;
  background: #d8dade;
  color: #3f4a60;
}
.wide.doc {
  width: 250px;
}
.doc.current {
  margin-right: 0;
  background: #fff;
  color: #14181f;
}
.mon {
  margin-left: auto;
  stroke: #b3bfd3;
}
.dot {
  width: 6px;
  height: 6px;
  margin: 0 3px 0 8px;
  border-radius: 3px;
  background: #b3bfd3;
}
.dot.orange {
  margin-left: auto;
  background: #e59a0c;
}
.plus {
  width: 36px;
}
.plus svg {
  width: 12px;
  height: 12px;
}
.sys {
  display: flex;
  align-items: center;
  margin-left: auto;
}
.sys svg {
  fill: none;
  stroke: #45547a;
}
.sys button {
  width: 28px;
  height: 30px;
}
.sys button svg {
  width: 12px;
  height: 12px;
  stroke: #8a97b4;
}
.s-two {
  width: 24px;
  height: 14px;
}
.s-two text {
  fill: #45547a;
  stroke: none;
  font-size: 11px;
}
.s-grid {
  width: 14px;
  height: 14px;
  margin: 0 15px 0 13px;
}
.s-avatar.s-avatar {
  width: 20px;
  height: 20px;
  margin-right: 10px;
  stroke: none;
}
.sys .vline {
  height: 20px;
  margin-right: 3px;
  background: #c3c8d2;
}

/* menu bar */
.menubar {
  display: flex;
  align-items: center;
  flex: none;
  height: 38px;
  padding-left: 15px;
  background: #fff;
}
.file {
  gap: 5px;
  margin-right: 10px;
}
.quick {
  display: flex;
  align-items: center;
  margin: 0 4px;
}
.quick button {
  width: 25px;
  height: 24px;
}
.quick .undo {
  width: 34px;
  gap: 3px;
}
.faded .ico {
  stroke: #b3b8c2;
}
.pill {
  width: 44px;
  height: 20px;
  margin: 0 3px 0 5px;
  border-radius: 10px;
  background: #488ef3;
  color: #fff;
  font-weight: 700;
}
.menu {
  padding: 0 13px;
}
.menu.roomy {
  padding: 0 16px;
}
.find {
  display: flex;
  align-items: center;
  gap: 1px;
  margin-left: 13px;
}
.find .ico {
  stroke: #8993aa;
}
.find input {
  width: 140px;
}
.find input::placeholder {
  color: #7c88a3;
  opacity: 1;
}
.cloudbar {
  display: flex;
  align-items: center;
  margin-left: auto;
  padding-right: 14px;
}
.cloudbar button {
  gap: 4px;
  margin-right: 10px;
}
.cloudbar .vline {
  height: 20px;
}
.cloudbar .ico {
  stroke: #5b667d;
}
.cloudbar .tiny {
  margin: 0 0 0 9px;
}

/* ribbon */
.ribbon {
  position: relative;
  z-index: 1;
  display: flex;
  flex: none;
  height: 64px;
  background: #fff;
  box-shadow: 0 1px 4px rgba(40, 50, 70, 0.2);
}
.group {
  position: relative;
  display: flex;
  height: 62px;
  border-right: 1px solid #e9ebef;
}
.corner {
  position: absolute;
  right: 5px;
  bottom: 2px;
  width: 5px;
  height: 5px;
  border: solid #8a95ae;
  border-width: 0 1px 1px 0;
}
.big {
  flex-direction: column;
  justify-content: flex-start;
  gap: 3px;
  height: 50px;
  margin-top: 5px;
}
.big span {
  display: flex;
  align-items: center;
  gap: 3px;
  height: 18px;
}
.bigico {
  width: 24px;
  height: 24px;
  fill: none;
  stroke: #3a4458;
}
.clip {
  padding: 0 10px 0 13px;
}
.stack {
  display: flex;
  flex-direction: column;
  gap: 3px;
  margin: 2px 10px 0 11px;
}
.stack button {
  gap: 4px;
  height: 24px;
}
.font,
.para {
  flex-direction: column;
  gap: 3px;
  padding: 2px 0 0 5px;
}
.font {
  width: 317px;
}
.para {
  width: 255px;
}
.line {
  display: flex;
  align-items: center;
  height: 24px;
}
.tool {
  width: 25px;
  height: 24px;
}
.tool.split {
  justify-content: flex-start;
  width: 34px;
  padding-left: 4px;
  gap: 3px;
}
.tool.active {
  border-radius: 2px;
  background: #dde1e7;
}
.rule {
  width: 1px;
  height: 18px;
  margin: 0 4px;
  background: #d8dbe2;
}
.wen {
  fill: #2f394d;
  stroke: none;
  font: 9px "Open Sans", sans-serif;
  text-anchor: middle;
}
.combo {
  display: flex;
  flex: none;
  align-items: center;
  width: 195px;
  height: 24px;
  margin-right: 3px;
  border: 1px solid #d9dce3;
  border-radius: 2px;
}
.combo input {
  height: 22px;
  padding-left: 3px;
  font-size: 13px;
}
.combo .name {
  width: 105px;
}
.combo .size {
  width: 71px;
  margin-left: 3px;
  border-left: 1px solid #d9dce3;
}
.gallery {
  padding: 2px 5px 0;
}
.styles {
  display: flex;
  width: 277px;
  height: 49px;
  border: 1px solid #dcdee4;
  border-radius: 2px;
}
.style {
  flex-direction: column;
  justify-content: flex-start;
  width: 65px;
  height: 47px;
  padding: 0 2px;
  color: #000;
}
.style .sample {
  display: flex;
  align-items: center;
  width: 61px;
  height: 30px;
  margin-top: 1px;
  overflow: hidden;
}
.style .name {
  line-height: 16px;
  color: #222b3d;
}
.style.normal {
  border: 2px solid #dcdee4;
  margin-top: -1px;
  height: 49px;
  padding: 0;
}
.normal .sample {
  font-family: Lato, sans-serif;
  font-size: 14px;
}
.h1 .sample {
  font-size: 24px;
  font-weight: 700;
}
.h2 .sample {
  font-size: 20px;
  font-weight: 700;
}
.h3 .sample {
  font-size: 18px;
  font-weight: 700;
}
.spin {
  display: flex;
  flex-direction: column;
  flex: 1;
  border-left: 1px solid #e6e8ec;
}
.spin button {
  flex: 1;
  border-bottom: 1px solid #e6e8ec;
}
.spin .exp {
  flex-direction: column;
  border: 0;
}
.exp::before {
  content: "";
  width: 5px;
  height: 1px;
  margin-bottom: 2px;
  background: #76829d;
}
.group.wide {
  gap: 11px;
  padding: 0 10px;
}

/* document area */
.work {
  display: flex;
  flex: 1;
  min-height: 0;
}
.vruler {
  flex: none;
  width: 16px;
  overflow: hidden;
  background: linear-gradient(#f5f7f9 153px, #8a96ad 153px, #8a96ad 154px, #e8ebf1 154px);
}
.tabmark {
  width: 6px;
  height: 6px;
  margin: 12px 0 31px 4px;
}
.vstrip {
  display: flex;
  flex-direction: column;
  height: 838px;
}
.vstrip span {
  display: flex;
  flex: 1;
  align-items: center;
  justify-content: center;
}
.vstrip b {
  transform: rotate(-90deg);
  color: #4b566c;
  font: 10px/12px "Open Sans", sans-serif;
}
.editor {
  display: flex;
  flex: 1;
  flex-direction: column;
  align-items: center;
  min-width: 0;
  padding-left: 8px;
  overflow: hidden;
}
.hruler {
  flex: none;
  width: 889px;
  height: 47px;
  padding-left: 17px;
}
.hstrip {
  position: relative;
  display: flex;
  width: 860px;
  height: 16px;
  background: linear-gradient(90deg, transparent 116px, #e8ebf1 116px, #e8ebf1 737px, transparent 737px);
}
.hstrip span {
  flex: 1;
  width: 0;
  background: linear-gradient(#8a96ad, #8a96ad) 0 6px / 1px 10px no-repeat;
  color: #4b566c;
  font-size: 10px;
  line-height: 16px;
  text-align: center;
}
.hstrip span:last-of-type {
  background: linear-gradient(#8a96ad, #8a96ad) 0 6px / 1px 10px no-repeat, linear-gradient(#8a96ad, #8a96ad) 100% 6px / 1px 10px no-repeat;
}
.mark {
  position: absolute;
  top: 0;
  fill: #fff;
  stroke: #3f4a60;
}
.mark.first {
  left: 112px;
  width: 10px;
  height: 22px;
}
.mark.last {
  left: 732px;
  width: 10px;
  height: 16px;
}
.paper {
  flex: 1;
  width: 889px;
  padding-top: 81px;
  background: #fff;
  box-shadow: 0 0 16px rgba(0, 0, 0, 0.24);
}
.margin {
  width: 26px;
  height: 27px;
  margin-left: 109px;
  border: solid #c0c0c0;
  border-width: 0 1px 1px 0;
}
.content {
  margin: 11px 0 0 133px;
  color: #000;
  font: 500 96px/112px Lato, sans-serif;
}
.content span {
  font-size: 64px;
  font-weight: 700;
  line-height: 0;
  vertical-align: 34px;
}
.scroll {
  flex: none;
  width: 15px;
  display: flex;
  flex-direction: column;
  align-items: center;
}
.brick {
  width: 10px;
  height: 12px;
  margin: 4px 0 2px;
}
.track {
  display: flex;
  flex: 1;
  flex-direction: column;
  align-items: center;
  width: 15px;
  padding: 7px 0 5px;
  background: #e8eaf0;
}
.thumb {
  width: 12px;
  height: 59%;
  margin-top: 11px;
  border-radius: 6px;
  background: #d4d7e1;
}
.nav {
  width: 10px;
  height: 64px;
  margin-top: auto;
}

/* right pane */
.pane {
  display: flex;
  flex: none;
  flex-direction: column;
  width: 261px;
  border: solid #dfe2e9;
  border-width: 0 1px;
}
.panehead {
  display: flex;
  align-items: center;
  height: 30px;
  padding: 0 2px 0 9px;
  color: #3b465c;
}
.panehead .caret {
  margin-left: 4px;
}
.panehead button {
  width: 24px;
  height: 24px;
}
.panehead .first {
  margin-left: auto;
}
.panetabs {
  display: flex;
  height: 37px;
  margin: 0 11px 0 12px;
  border-bottom: 1px solid #dfe2e9;
}
.panetabs button {
  width: 72px;
  height: 37px;
}
.panetabs .on {
  border-bottom: 2px solid #4a90f0;
  color: #4a90f0;
}
.panetabs .ham {
  width: 20px;
}
.ham .ico {
  width: 10px;
  height: 12px;
}
.banner {
  display: flex;
  align-items: center;
  gap: 8px;
  height: 41px;
  margin: 8px 11px 16px 12px;
  padding: 0 15px;
  border: 1px solid #5a97f5;
  border-radius: 2px;
  background: #ebf2fe;
}
.banner > svg {
  width: 16px;
  height: 16px;
}
.banner button {
  margin-left: auto;
}
.banner button .ico {
  stroke: #77829a;
}
.layout {
  height: 30px;
  margin: 0 11px 0 12px;
  border-radius: 2px;
  background: #b6d4fb;
  color: #fff;
  font-weight: 700;
}
.fold {
  justify-content: flex-start;
  gap: 8px;
  height: 18px;
  margin: 17px 0 7px 20px;
}
.fold svg {
  width: 6px;
  height: 6px;
}
.fold.open {
  margin: 24px 0 9px 20px;
  color: #3f87ee;
}
.panel {
  height: 517px;
  margin: 0 6px 0 7px;
  padding: 8px;
  overflow: hidden;
  background: #fff;
}
.tones {
  display: flex;
  gap: 10px;
  margin-bottom: 8px;
}
.tones button {
  width: 52px;
  height: 20px;
  border-radius: 3px;
  color: #7582a0;
}
.tones .on {
  background: #e7eaef;
  color: #3b465c;
}
.cards {
  display: grid;
  grid-template-columns: 1fr 1fr;
  grid-auto-rows: 1fr;
  gap: 8px;
  height: 515px;
}
.card {
  position: relative;
  align-items: flex-start;
  padding-top: 2px;
  border: 1px solid #e8e9ec;
  border-radius: 8px;
}
.card svg {
  width: 99px;
  height: 51px;
}
.card text {
  font: 700 6px "Open Sans", sans-serif;
  text-anchor: middle;
}
.badge {
  position: absolute;
  top: 3px;
  right: 3px;
  padding: 2px 4px;
  border-radius: 3px;
  background: #e9f1fe;
  color: #3a7cf5;
  font-weight: 700;
}
.rail {
  display: flex;
  flex: none;
  flex-direction: column;
  align-items: center;
  gap: 4px;
  width: 44px;
}
.grip {
  width: 20px;
  height: 4px;
  margin: 11px 0 9px;
  border: solid #ccd0d8;
  border-width: 1px 0;
}
.rail button {
  width: 32px;
  height: 32px;
  border-radius: 2px;
}
.rail .on {
  background: #dadee5;
}
.railfoot {
  display: flex;
  justify-content: center;
  width: 38px;
  height: 42px;
  margin-top: auto;
  padding-top: 21px;
  border-top: 1px solid #dcdfe6;
}
.railfoot .ico {
  width: 18px;
  height: 6px;
}

/* status bar */
.status {
  display: flex;
  align-items: center;
  flex: none;
  height: 29px;
  border-top: 1px solid #dfe2e8;
  background: #f5f7f9;
}
.cell {
  height: 22px;
  padding: 0 6px 0 10px;
  border-right: 1px solid #dfe2e8;
  line-height: 22px;
  white-space: nowrap;
}
.cell.open {
  padding-right: 4px;
  border-right-color: transparent;
}
.cell.pad {
  padding: 0 10px 0 8px;
}
.check {
  gap: 3px;
  padding: 0 4px 0 3px;
}
.check .caret {
  margin-left: 2px;
}
.views {
  display: flex;
  align-items: center;
  margin-left: auto;
  padding-right: 14px;
}
.views button {
  width: 24px;
  height: 24px;
  margin-right: 2px;
  border-radius: 2px;
}
.views .on {
  background: #dadee5;
}
.views .vline {
  height: 14px;
  margin: 0 10px 0 8px;
}
.views .pct {
  justify-content: space-between;
  width: 43px;
  margin: 0 10px 0 2px;
  color: #3f4a60;
}
.views .step {
  width: 10px;
  margin: 0;
}
.step svg {
  width: 10px;
  height: 10px;
  stroke: #222b3d;
  stroke-width: 2;
}
.views input {
  appearance: none;
  width: 145px;
  height: 14px;
  margin: 0 5px 0 12px;
  background: linear-gradient(90deg, #3f4a60 48%, #b4bac8 48%) center / 100% 1px no-repeat;
}
.views input::-webkit-slider-thumb {
  appearance: none;
  width: 12px;
  height: 12px;
  border: 1px solid #3f4a60;
  border-radius: 6px;
  background: #f5f7f9;
}
.views .fullscreen {
  width: 18px;
  margin: 0 0 0 11px;
}

/* font dialog */
.dialog {
  position: absolute;
  z-index: 2;
  top: 197px;
  left: 693px;
  width: 506px;
  border: 1px solid #6f6f6f;
  background: #f0f0f0;
  color: #000;
}
.titlebar {
  display: flex;
  align-items: center;
  gap: 5px;
  height: 25px;
  padding: 0 9px 2px 3px;
  background: #fff;
}
.titlebar button {
  margin-left: auto;
}
.titlebar button svg {
  width: 12px;
  height: 12px;
}
.dtabs {
  display: flex;
  align-items: flex-end;
  padding: 7px 0 0 7px;
}
.dtabs button {
  width: 87px;
  height: 24px;
  border: 1px solid #d9d9d9;
  border-width: 1px 1px 0 0;
}
.dtabs .on {
  z-index: 1;
  width: 67px;
  height: 25px;
  margin-bottom: -1px;
  border-width: 1px 1px 0 1px;
  background: #fff;
}
.sheet {
  margin: 0 9px 0 7px;
  padding: 7px 7px 7px 15px;
  border: 1px solid #d9d9d9;
  background: #fff;
}
.cols {
  display: grid;
  gap: 6px;
}
.three {
  grid-template-columns: 226px 113px 113px;
}
.four {
  grid-template-columns: 110px 110px 113px 113px;
}
.col {
  display: flex;
  flex-direction: column;
  gap: 30px;
}
.field {
  display: flex;
  flex-direction: column;
}
.field > label {
  margin-bottom: 2px;
}
.field > input {
  height: 23px;
  padding: 0 4px;
  border: 1px solid #7a7a7a;
}
.drop {
  display: grid;
  align-items: center;
}
.drop > * {
  grid-area: 1 / 1;
}
.drop select {
  appearance: none;
  width: 100%;
  height: 23px;
  padding: 0 20px 0 4px;
  border: 1px solid #7a7a7a;
  background: #fff;
}
.drop svg,
.bar svg {
  justify-self: end;
  width: 10px;
  height: 6px;
  margin-right: 4px;
  fill: none;
  stroke: #444;
}
.bar svg {
  margin: 0;
  stroke: #505050;
  stroke-width: 2;
}
.flat.drop select {
  padding: 0 16px 0 0;
  border-color: #adadad;
  background: #e1e1e1;
  color: #000;
  opacity: 1;
  text-align: center;
}
.flat.start select {
  padding-left: 4px;
  text-align: left;
}
.flat i {
  justify-self: end;
  margin-right: 5px;
  border: 4px solid transparent;
  border-top-color: #000;
  border-bottom: 0;
}
.off > label {
  color: #9d9d9d;
}
.off .drop select {
  border-color: #bfbfbf;
  background: #ccc;
  color: #838383;
}
.off .flat i {
  border-top-color: #a0a0a0;
}
.list {
  display: flex;
  height: 73px;
  padding: 1px 1px 0;
  border: 1px solid #83838c;
  border-top: 2px solid #6a6a72;
}
.list select {
  appearance: none;
  flex: 1;
  min-width: 0;
  height: 69px;
  margin-right: 2px;
  overflow: hidden;
}
.list option {
  height: 23px;
  min-height: 23px;
  padding: 1px 3px 0;
  color: #000;
  line-height: 22px;
}
.list option:checked {
  background: #e8ebf1 linear-gradient(#e8ebf1, #e8ebf1);
  color: #000;
}
.bar {
  display: flex;
  flex-direction: column;
  align-items: center;
  width: 15px;
  padding: 7px 0;
  background: #f0f0f0;
}
.bar i {
  width: 15px;
  height: 26px;
  margin: 4px 0 auto;
  background: #cdcdcd;
}
.bar.low i {
  height: 18px;
  margin: auto 0 5px;
}
.sheet h3 {
  display: flex;
  align-items: center;
  gap: 2px;
  margin: 10px 0 5px -8px;
  font-size: 12px;
  font-weight: 400;
  line-height: 18px;
}
.sheet h3::after {
  content: "";
  flex: 1;
  height: 1px;
  background: #a0a0a0;
}
.sheet h3.tight {
  margin-top: 2px;
}
.effects {
  display: grid;
  grid-template-columns: 1fr 1fr;
  grid-auto-rows: 24px;
  margin-top: -1px;
}
.effects label {
  display: flex;
  align-items: center;
  gap: 5px;
}
.effects input {
  appearance: none;
  width: 13px;
  height: 13px;
  border: 1px solid #333;
}
.effects input:checked::before {
  content: "";
  display: block;
  width: 8px;
  height: 4px;
  margin: 2px 1px;
  border: solid #333;
  border-width: 0 0 1px 1px;
  transform: rotate(-45deg);
}
.sampler {
  height: 58px;
  padding-top: 17px;
  overflow: hidden;
  border: 1px solid #000;
  font: 500 48px/56px Lato, sans-serif;
  text-align: center;
}
.note {
  margin: 6px 0 0;
}
.actions {
  display: flex;
  align-items: center;
  gap: 8px;
  padding: 8px;
}
.actions button {
  width: 77px;
  height: 30px;
  border: 1px solid #adadad;
  background: #e1e1e1;
}
.actions .mid {
  width: 80px;
}
.actions a {
  display: flex;
  align-items: center;
  gap: 6px;
  margin-left: 3px;
  color: #4a90f0;
  text-decoration: none;
}
.actions a svg {
  width: 14px;
  height: 14px;
  fill: none;
}
.actions .ok {
  margin-left: auto;
  border: 2px solid #0078d7;
}
.hint {
  position: absolute;
  border: 3px solid #f40000;
  box-shadow: 3px 3px 5px rgba(0, 0, 0, 0.5), inset 3px 3px 5px rgba(0, 0, 0, 0.4);
  pointer-events: none;
}
.hint-sub {
  top: 432px;
  left: 5px;
  width: 81px;
  height: 28px;
}
.hint-ok {
  top: 569px;
  left: 313px;
  width: 109px;
  height: 66px;
}

/* overlays at the window edge */
.meter {
  position: absolute;
  top: 780px;
  right: 0;
  display: flex;
  flex-direction: column;
  gap: 1px;
  width: 10px;
  height: 59px;
  padding: 7px 2px 6px 4px;
  border-radius: 3px 0 0 3px;
  background: #4b5163;
}
.meter i {
  flex: none;
  height: 1px;
}
.watermark {
  position: absolute;
  z-index: 2;
  right: 10px;
  bottom: 8px;
  display: flex;
  align-items: center;
  opacity: 0.85;
  pointer-events: none;
}
.watermark svg {
  width: 44px;
  height: 42px;
}
.watermark strong {
  display: block;
  color: #5b9bd8;
  font-size: 21px;
  line-height: 26px;
}
.watermark em {
  display: block;
  color: #5fc27a;
  font: 700 16px/18px "Liberation Sans", sans-serif;
}
</style>
